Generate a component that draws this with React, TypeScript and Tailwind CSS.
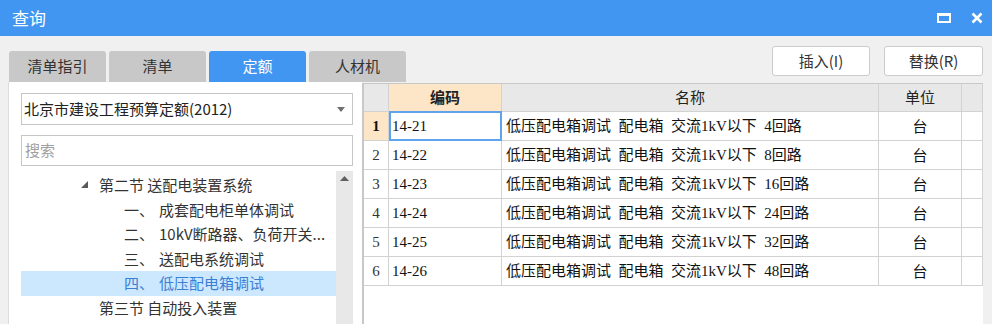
import React from "react";

const CJK = '"Noto Sans CJK SC", "Noto Sans", sans-serif';
const SERIF = '"Liberation Serif", "Noto Sans CJK SC", serif';

const rows = [
  { n: 1, code: "14-21", name: "低压配电箱调试  配电箱  交流1kV以下  4回路" },
  { n: 2, code: "14-22", name: "低压配电箱调试  配电箱  交流1kV以下  8回路" },
  { n: 3, code: "14-23", name: "低压配电箱调试  配电箱  交流1kV以下  16回路" },
  { n: 4, code: "14-24", name: "低压配电箱调试  配电箱  交流1kV以下  24回路" },
  { n: 5, code: "14-25", name: "低压配电箱调试  配电箱  交流1kV以下  32回路" },
  { n: 6, code: "14-26", name: "低压配电箱调试  配电箱  交流1kV以下  48回路" },
];

const tabs = [
  { label: "清单指引", active: false },
  { label: "清单", active: false },
  { label: "定额", active: true },
  { label: "人材机", active: false },
];

function TreeRow({
  children,
  selected,
}: {
  children: React.ReactNode;
  selected?: boolean;
}) {
  return (
    <div
      className={`h-[24.5px] flex items-center text-[15px] whitespace-nowrap ${
        selected ? "bg-[#cce8ff] text-[#3b7fd4]" : "text-[#333333]"
      }`}
    >
      {children}
    </div>
  );
}

export default function App() {
  return (
    <div
      className="w-[992px] h-[324px] bg-[#f0f0f0] flex flex-col overflow-hidden"
      style={{ fontFamily: CJK }}
    >
      {/* title bar */}
      <div className="h-9 bg-[#4096f0] flex items-center justify-between pl-3 pr-[9px] shrink-0">
        <span className="text-white text-[17px]">查询</span>
        <div className="flex items-center gap-[20px]">
          <svg width="14" height="10" viewBox="0 0 14 10">
            <path d="M0 0H14V10H0Z M2 3V8H12V3Z" fill="white" fillRule="evenodd" />
          </svg>
          <svg width="12" height="12" viewBox="0 0 12 12">
            <path d="M1.5 1.5L10.5 10.5M10.5 1.5L1.5 10.5" stroke="white" strokeWidth="2.6" />
          </svg>
        </div>
      </div>

      {/* tabs + buttons */}
      <div className="h-[46px] flex justify-between pl-[9px] pr-[9px] shrink-0">
        <div className="flex items-end gap-[3px]">
          {tabs.map((t) => (
            <div
              key={t.label}
              className={`w-[97px] h-[31px] rounded-t-[3px] flex items-center justify-center text-[15px] ${
                t.active ? "bg-[#4096f0] text-white" : "bg-[#c8c8c8] text-[#333333]"
              }`}
            >
              {t.label}
            </div>
          ))}
        </div>
        <div className="flex items-start pt-[10px] gap-[14px]">
          <div className="w-[98px] h-[30px] bg-white border border-[#cccccc] rounded-[3px] flex items-center justify-center text-[15px] text-[#333333]">
            插入(I)
          </div>
          <div className="w-[99px] h-[30px] bg-white border border-[#cccccc] rounded-[3px] flex items-center justify-center text-[15px] text-[#333333]">
            替换(R)
          </div>
        </div>
      </div>

      {/* content */}
      <div className="flex-1 flex pl-2 pr-[9px] min-h-0">
        {/* left panel */}
        <div className="w-[354px] bg-white border-l border-[#dcdcdc] pl-3 pr-[9px] pt-[11px] flex flex-col">
          <div className="h-[32px] border border-[#c6c6c6] flex items-center justify-between pl-[2px] pr-[7px] text-[15px] text-[#222222]">
            <span>北京市建设工程预算定额(2012)</span>
            <svg width="8" height="5" viewBox="0 0 8 5">
              <path d="M0 0H8L4 5Z" fill="#707070" />
            </svg>
          </div>
          <div className="h-[31px] mt-[10px] border border-[#c6c6c6] flex items-center pl-[3px] text-[15px] text-[#a0a0a0]">
            搜索
          </div>
          <div className="flex-1 flex mt-[5px] min-h-0">
            <div className="flex-1 pt-[2px]">
              <TreeRow>
                <span className="w-[60px]" />
                <svg width="8" height="8" viewBox="0 0 8 8" className="mr-[10px]">
                  <path d="M7 0V7H0Z" fill="#5a5a5a" />
                </svg>
                <span>第二节 送配电装置系统</span>
              </TreeRow>
              <TreeRow>
                <span className="w-[103px]" />
                <span className="w-[35px]">一、</span>
                <span>成套配电柜单体调试</span>
              </TreeRow>
              <TreeRow>
                <span className="w-[103px]" />
                <span className="w-[35px]">二、</span>
                <span>10kV断路器、负荷开关...</span>
              </TreeRow>
              <TreeRow>
                <span className="w-[103px]" />
                <span className="w-[35px]">三、</span>
                <span>送配电系统调试</span>
              </TreeRow>
              <TreeRow selected>
                <span className="w-[103px]" />
                <span className="w-[35px]">四、</span>
                <span>低压配电箱调试</span>
              </TreeRow>
              <TreeRow>
                <span className="w-[78px]" />
                <span>第三节 自动投入装置</span>
              </TreeRow>
            </div>
            <div className="w-[17px] bg-[#e8e8e8] flex justify-center pt-[5px]">
              <svg width="9" height="5" viewBox="0 0 9 5">
                <path d="M0 5L4.5 0L9 5Z" fill="#606060" />
              </svg>
            </div>
          </div>
        </div>

        {/* table */}
        <div className="w-[621px] mt-px bg-white border-l-2 border-t border-[#c8c8c8] flex flex-col">
          <div className="flex h-[28px] text-[15px] text-[#222222]">
            <div className="w-[25px] bg-[#e8e8e8] border-r border-b border-[#d2d2d2]" />
            <div className="w-[113px] bg-[#fde6c8] border-r border-b border-[#d2d2d2] flex items-center justify-center font-bold">
              编码
            </div>
            <div className="w-[377px] bg-[#e8e8e8] border-r border-b border-[#d2d2d2] flex items-center justify-center">
              名称
            </div>
            <div className="w-[83px] bg-[#e8e8e8] border-r border-b border-[#d2d2d2] flex items-center justify-center">
              单位
            </div>
            <div className="w-[21px] bg-[#e8e8e8] border-r border-b border-[#d2d2d2]" />
          </div>
          {rows.map((r) => (
            <div key={r.n} className="flex h-[29px] text-[15px] text-[#111111]">
              <div
                className={`w-[25px] border-r border-b border-[#d2d2d2] flex items-center justify-center ${
                  r.n === 1 ? "bg-[#fde6c8] font-bold" : "bg-white text-[#333333]"
                }`}
                style={{ fontFamily: SERIF }}
              >
                {r.n}
              </div>
              <div
                className="w-[113px] relative border-r border-b border-[#d2d2d2] flex items-center pl-[3px]"
                style={{ fontFamily: SERIF }}
              >
                {r.code}
                {r.n === 1 && (
                  <div className="absolute top-[-1px] left-0 right-[-1px] bottom-[-1px] border-2 border-[#5fa3ea]" />
                )}
              </div>
              <div
                className="w-[377px] border-r border-b border-[#d2d2d2] flex items-center pl-[4px] whitespace-pre"
                style={{ fontFamily: SERIF }}
              >
                {r.name}
              </div>
              <div className="w-[83px] border-r border-b border-[#d2d2d2] flex items-center justify-center">
                台
              </div>
              <div className="w-[21px] border-r border-b border-[#d2d2d2]" />
            </div>
          ))}
        </div>
      </div>
    </div>
  );
}
